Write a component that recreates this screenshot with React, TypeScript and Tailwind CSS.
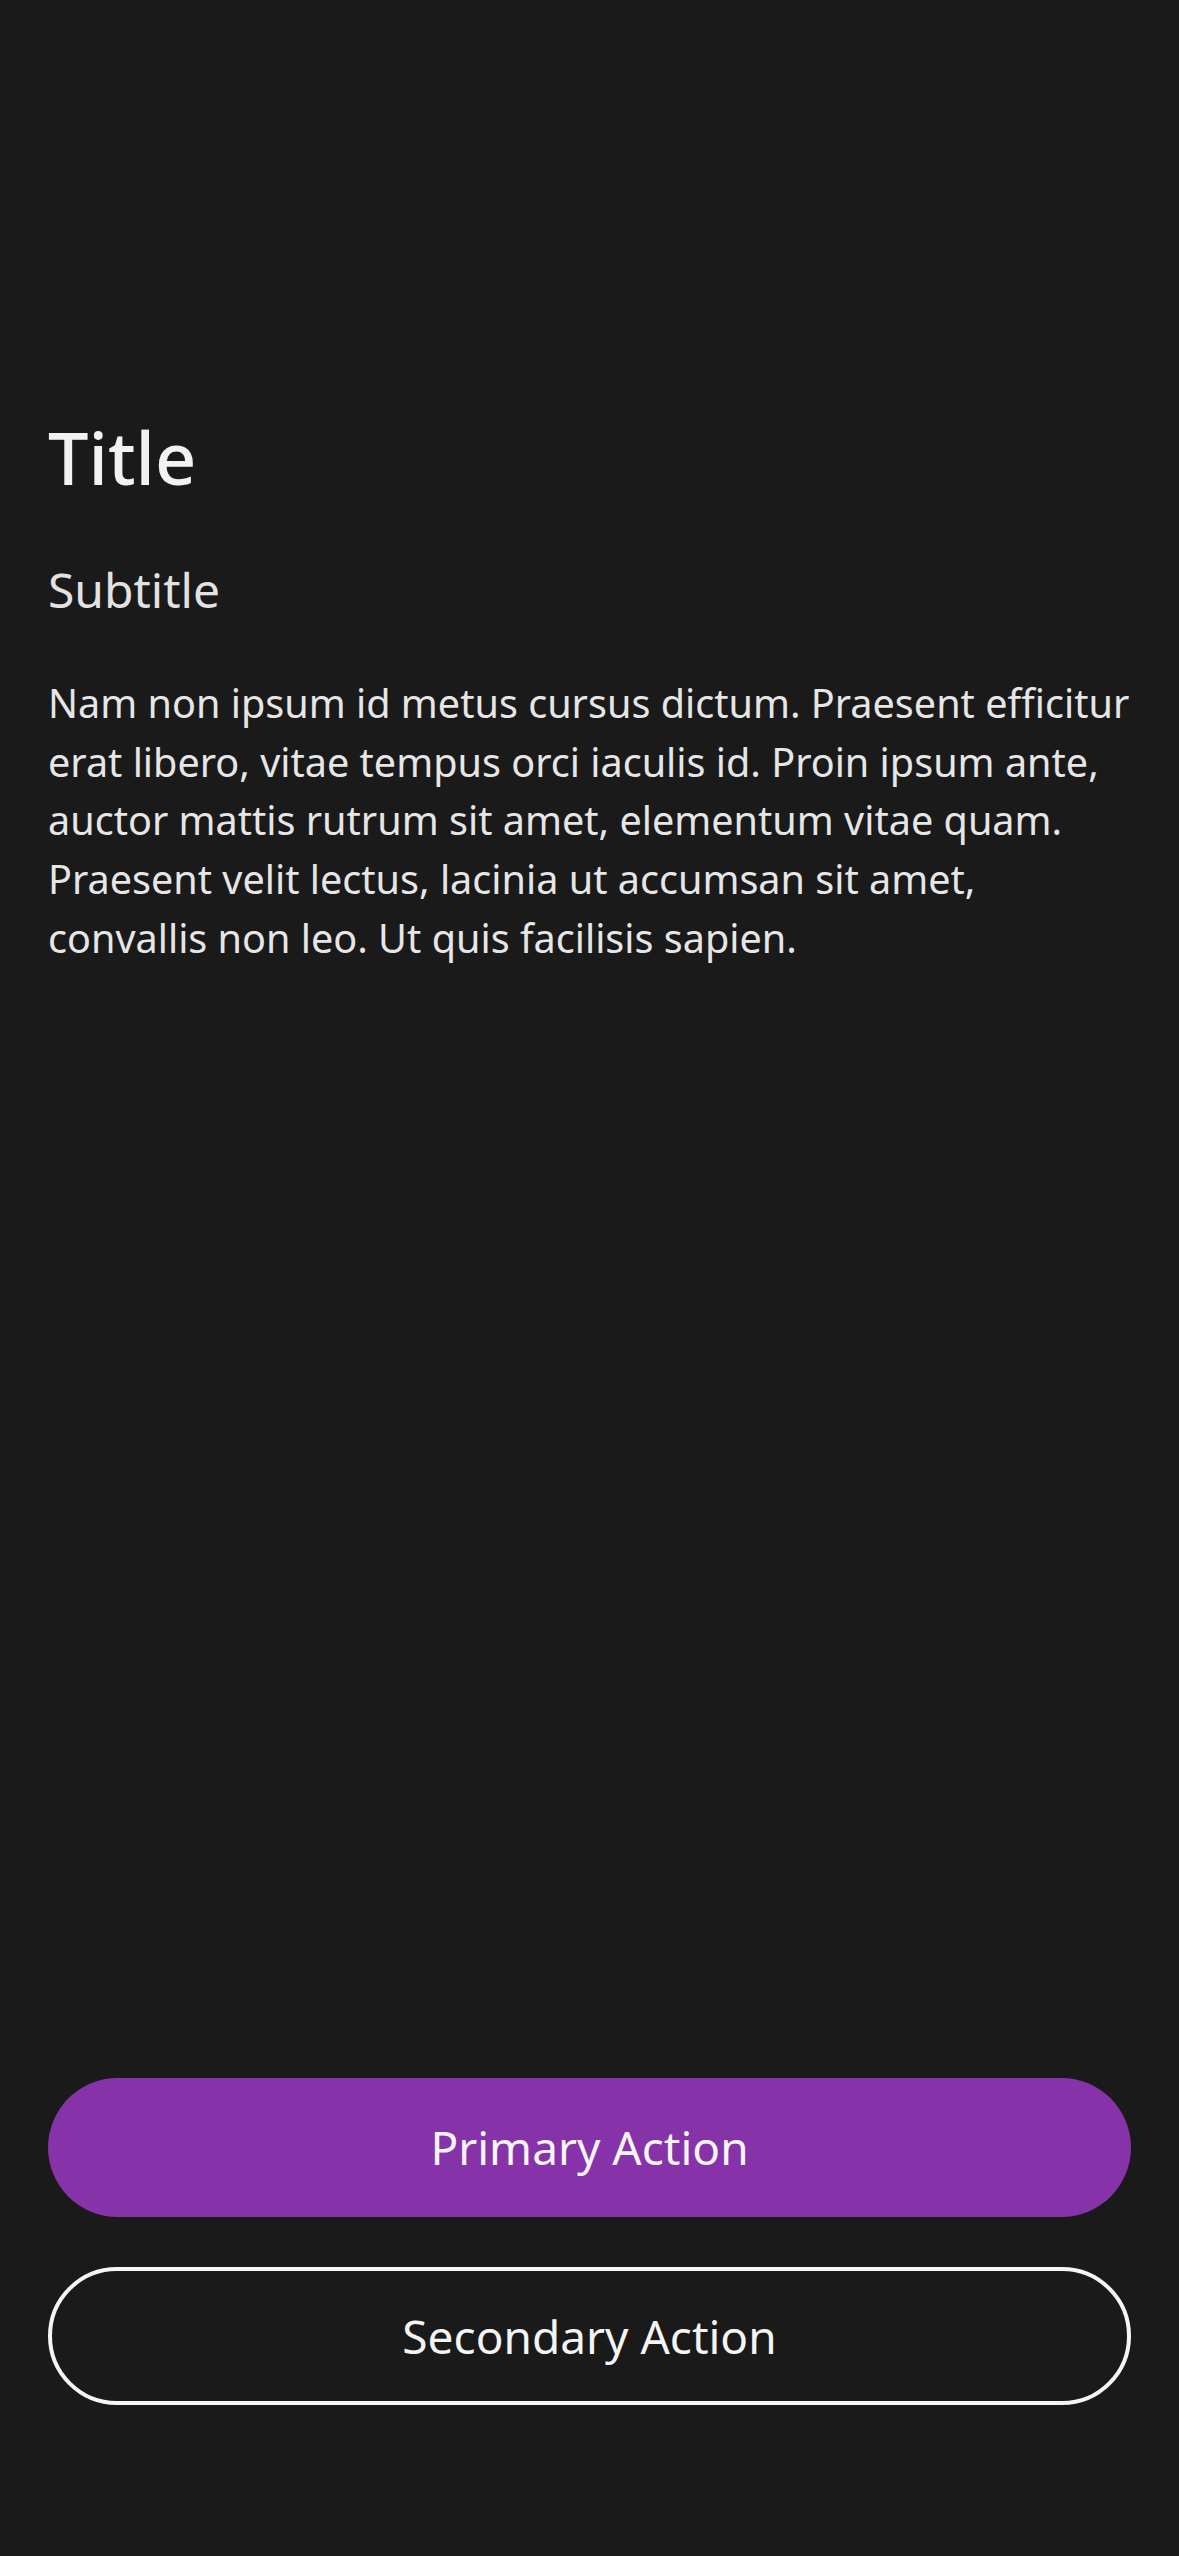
import React from "react";

export default function App() {
  return (
    <div
      className="flex h-[2556px] w-full flex-col bg-[#1a1a1a] pb-[151px] pl-[48px] pr-[43px] pt-[414px]"
      style={{ fontFamily: '"Noto Sans", "Open Sans", sans-serif' }}
    >
      <h1 className="text-[72px] leading-[86px] font-medium text-[#f2f2f2]">Title</h1>
      <h2 className="mt-[60px] text-[48px] leading-[60px] font-normal text-[#e2e2e2]">Subtitle</h2>
      <p className="mt-[54px] text-[39.6px] leading-[58.7px] text-[#e6e6e6]">
        Nam non ipsum id metus cursus dictum. Praesent efficitur erat libero, vitae tempus orci iaculis id. Proin
        ipsum ante, auctor mattis rutrum sit amet, elementum vitae quam. Praesent velit lectus, lacinia ut accumsan
        sit amet, convallis non leo. Ut quis facilisis sapien.
      </p>
      <div className="flex-1" />
      <div className="mr-[5px] flex flex-col gap-[50px]">
        <button className="flex h-[139px] w-full items-center justify-center rounded-full bg-[#8633a9] text-[46px] text-[#f4f4f4]">
          Primary Action
        </button>
        <button className="flex h-[138px] w-full items-center justify-center rounded-full border-4 border-[#f5f5f5] bg-transparent text-[46px] text-[#f4f4f4]">
          Secondary Action
        </button>
      </div>
    </div>
  );
}
